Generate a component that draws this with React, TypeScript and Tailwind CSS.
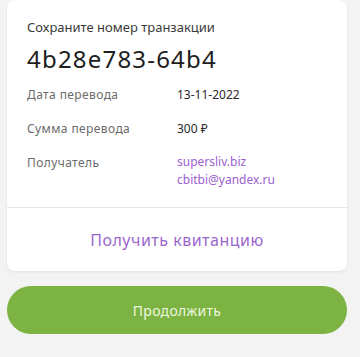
import React from "react";

export default function App() {
  const font = { fontFamily: '"Noto Sans", "Open Sans", sans-serif' };
  return (
    <div className="w-[360px] h-[357px] bg-[#f3f3f3] pl-[7px] flex flex-col" style={font}>
      <div className="w-[340px] bg-white rounded-lg shadow-[0_1px_3px_rgba(0,0,0,0.08)] flex flex-col">
        <div className="px-[20px] pt-[17px] pb-[18px] flex flex-col">
          <div className="text-[13px] leading-[20px] text-[#3a3a3a]">Сохраните номер транзакции</div>
          <div className="text-[24px] leading-[30px] tracking-[1.2px] text-[#1e1e1e] mt-[7px]">4b28e783-64b4</div>
          <div className="grid grid-cols-[150px_1fr] gap-y-[14px] text-[12px] leading-[20px] mt-[11px]">
            <div className="text-[#6b6b6b] tracking-[0.4px]">Дата перевода</div>
            <div className="text-[#2a2a2a]">13-11-2022</div>
            <div className="text-[#6b6b6b] tracking-[0.4px]">Сумма перевода</div>
            <div className="text-[#2a2a2a]">300 ₽</div>
            <div className="text-[#6b6b6b] tracking-[0.4px]">Получатель</div>
            <div className="text-[#9b5fd0] flex flex-col leading-[18px]">
              <span>supersliv.biz</span>
              <span>cbitbi@yandex.ru</span>
            </div>
          </div>
        </div>
        <div className="border-t border-[#e6e6e6] h-[64px] flex items-center justify-center">
          <span className="text-[16px] tracking-[0.5px] text-[#9b66cc]">Получить квитанцию</span>
        </div>
      </div>
      <button className="mt-[15px] w-[340px] h-[48px] rounded-full bg-[#7cb342] text-[#eef7df] text-[14px] tracking-[0.3px]">
        Продолжить
      </button>
    </div>
  );
}
